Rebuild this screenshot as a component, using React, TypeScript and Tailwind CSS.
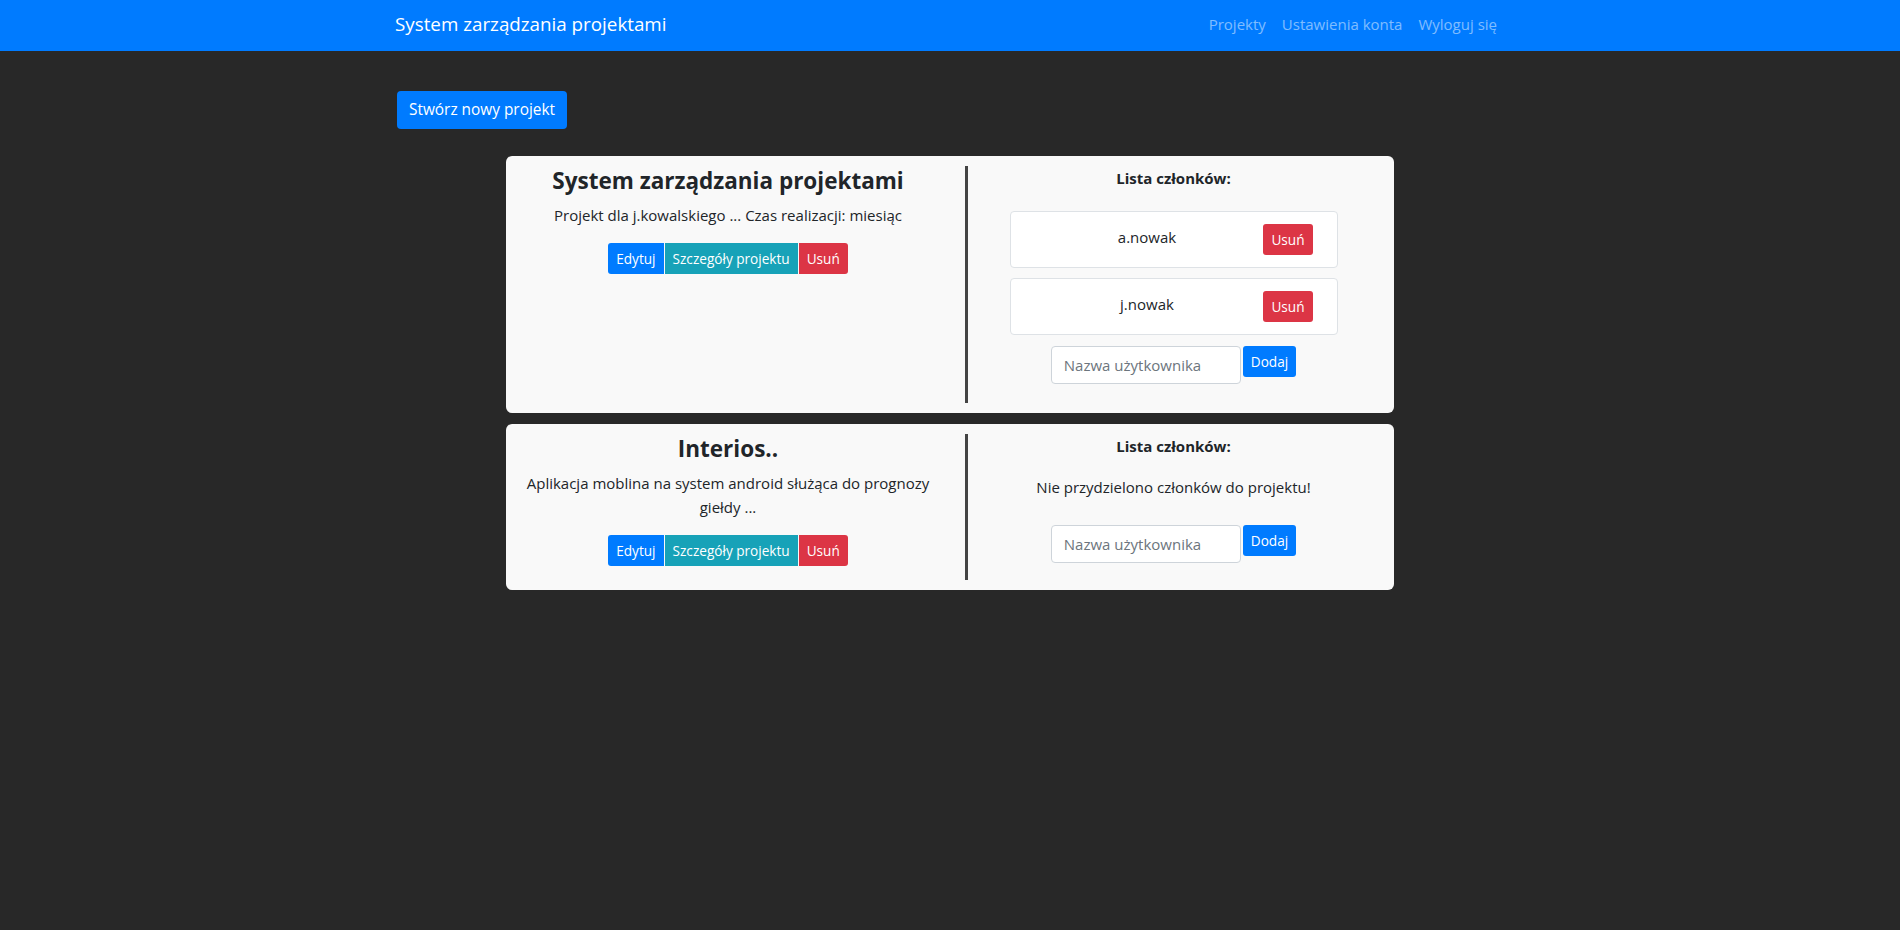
import React from 'react';

interface Member {
  name: string;
}

interface Project {
  title: string;
  description: string;
  members: Member[];
}

const PROJECTS: Project[] = [
  {
    title: 'System zarządzania projektami',
    description: 'Projekt dla j.kowalskiego ... Czas realizacji: miesiąc',
    members: [{ name: 'a.nowak' }, { name: 'j.nowak' }],
  },
  {
    title: 'Interios..',
    description: 'Aplikacja moblina na system android służąca do prognozy giełdy ...',
    members: [],
  },
];

const NAV_LINKS = ['Projekty', 'Ustawienia konta', 'Wyloguj się'];

const ProjectCard: React.FC<{ project: Project }> = ({ project }) => (
  <div className="w-[888px] bg-[#f9f9f9] rounded-md py-[10px] flex text-[#212529]">
    {/* Project info */}
    <div className="w-1/2 px-[15px] text-center">
      <h4 className="text-[22.5px] leading-[29px] font-bold mb-2">{project.title}</h4>
      <p className="text-[15px] leading-6 mb-4">{project.description}</p>
      <div className="inline-flex text-[13.6px] leading-[21px] text-white">
        <button className="bg-[#007bff] px-2 py-[5px] rounded-l-[3px]">Edytuj</button>
        <button className="bg-[#17a2b8] px-2 py-[5px] ml-px">Szczegóły projektu</button>
        <button className="bg-[#dc3545] px-2 py-[5px] ml-px rounded-r-[3px]">Usuń</button>
      </div>
    </div>

    {/* Members */}
    <div className="w-1/2 px-[15px]">
      <div
        className={`border-l-[3px] border-[#444444] h-full flex flex-col items-center ${
          project.members.length > 0 ? 'pb-[19px]' : 'pb-[17px]'
        }`}
      >
        <h6 className="text-[15px] leading-6 font-bold">Lista członków:</h6>
        {project.members.length > 0 ? (
          <div className="mt-[21px] flex flex-col gap-[10px]">
            {project.members.map((m) => (
              <div
                key={m.name}
                className="w-[328px] h-[57px] bg-white border border-[#dee2e6] rounded-[4px] px-5 flex items-center"
              >
                <span className="flex-1 text-center text-[15px] leading-6 mb-1.5">{m.name}</span>
                <button className="bg-[#dc3545] text-white text-[13.6px] leading-[21px] px-2 py-[5px] rounded-[3px] mr-1">
                  Usuń
                </button>
              </div>
            ))}
          </div>
        ) : (
          <p className="mt-[17px] text-[15px] leading-6">Nie przydzielono członków do projektu!</p>
        )}
        <div
          className={`flex items-start gap-[2px] ${project.members.length > 0 ? 'mt-[11px]' : 'mt-[26px]'}`}
        >
          <input
            placeholder="Nazwa użytkownika"
            className="w-[190px] h-[38px] bg-white border border-[#ced4da] rounded-[4px] px-3 text-[15px] text-[#495057] placeholder:text-[#6c757d] outline-none"
          />
          <button className="bg-[#007bff] text-white text-[13.6px] leading-[21px] px-2 py-[5px] rounded-[3px]">
            Dodaj
          </button>
        </div>
      </div>
    </div>
  </div>
);

export default function App() {
  return (
    <div className="min-h-screen bg-[#282828] font-['Open_Sans',sans-serif]">
      <nav className="h-[51px] bg-[#007bff]">
        <div className="w-[1140px] mx-auto px-[15px] h-full flex items-center justify-between">
          <a href="#" className="text-white text-[18.8px] leading-[30px] mb-[4px]">
            System zarządzania projektami
          </a>
          <div className="flex text-[15px] leading-6 text-white/50 mb-[4px]">
            {NAV_LINKS.map((label) => (
              <a key={label} href="#" className="px-2">
                {label}
              </a>
            ))}
          </div>
        </div>
      </nav>

      <main className="w-[1140px] mx-auto px-[15px] pt-10">
        <button className="bg-[#007bff] text-white text-[15.4px] leading-6 px-3 py-[7px] rounded-[4px] ml-[2px]">
          Stwórz nowy projekt
        </button>
        <div className="mt-[27px] flex flex-col items-center gap-[11px]">
          {PROJECTS.map((p) => (
            <ProjectCard key={p.title} project={p} />
          ))}
        </div>
      </main>
    </div>
  );
}
